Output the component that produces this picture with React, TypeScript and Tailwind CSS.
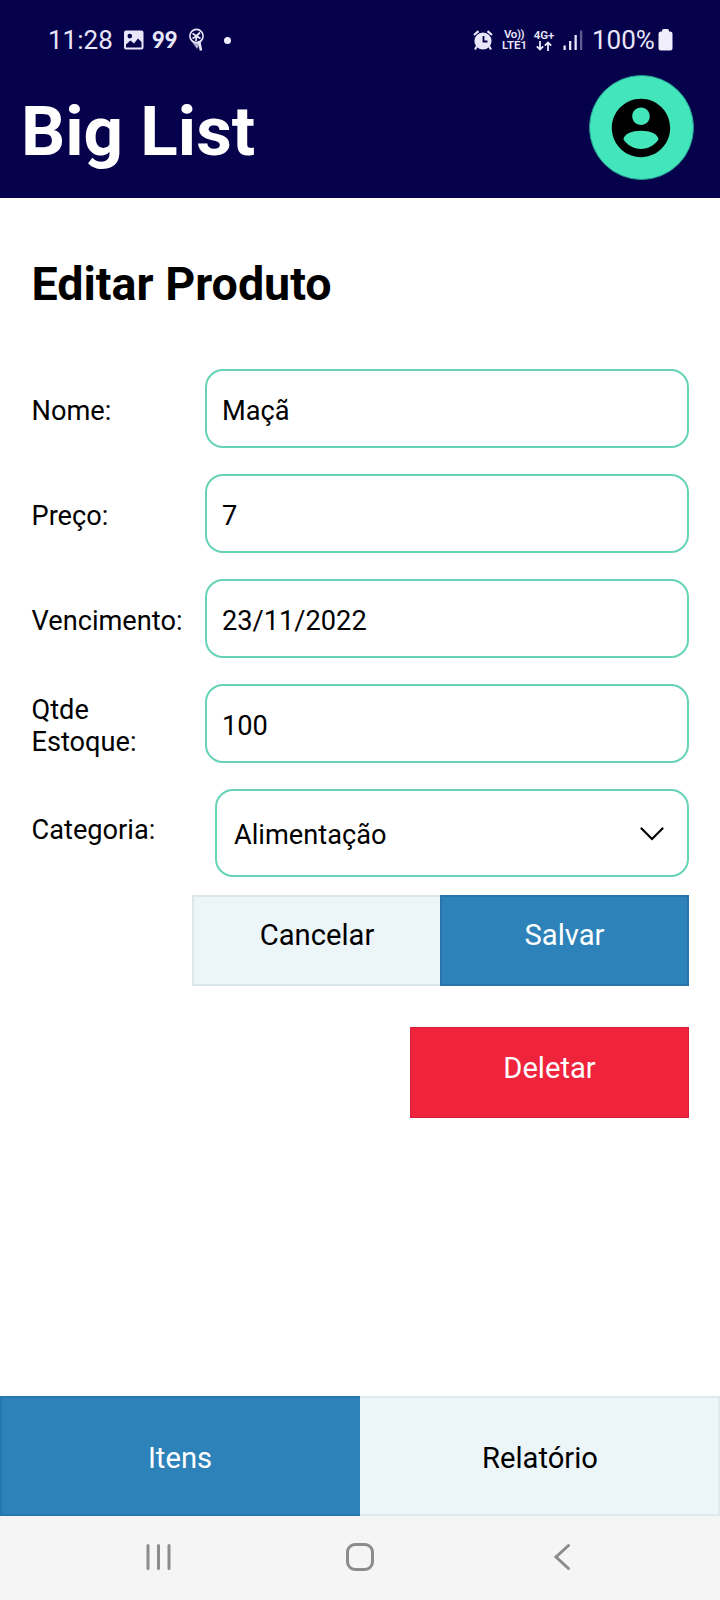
import React from "react";

function StatusBar() {
  return (
    <div className="flex h-[80px] items-center pl-[48px] text-[26px] text-[#e9e6fa]">
      <span className="w-[75px] leading-none">11:28</span>
      <svg className="ml-px h-[20px] w-[20px]" viewBox="0 0 20 20">
        <path fill="currentColor" fillRule="evenodd" d="M2 0.5H17.5Q19.5 .5 19.5 2.5V17.5Q19.5 19.5 17.5 19.5H2Q0 19.5 0 17.5V2.5Q0 .5 2 .5ZM5.8 3.8A2.3 2.3 0 1 0 5.8 8.4A2.3 2.3 0 1 0 5.8 3.8ZM2 17.5H17.5V12L14 8.5L10 13.5L6.5 10.5L2 14.5Z" />
      </svg>
      <span className="ml-[8px] w-[26px] font-[Lato,sans-serif] text-[22px] leading-none font-black">99</span>
      <svg className="ml-[10px] h-[24px] w-[18px]" viewBox="0 0 18 24" fill="none" stroke="currentColor">
        <path d="M2 11L9 21L12 16L15 11Z" fill="currentColor" stroke="none" opacity=".75" />
        <circle cx="8.5" cy="8" r="6.6" strokeWidth="1.6" fill="#05014a" />
        <path strokeWidth="1.8" d="M8.5 8L4.5 5.5M8.5 8L12 4.5M8.5 8L12.5 10.5M8.5 8L4.5 10.5M8.5 8L8 13" />
        <path strokeWidth="2.6" d="M11 13L13 22.5" />
      </svg>
      <span className="ml-[18px] h-[7px] w-[7px] rounded-full bg-[#f1effd]" />
      <svg className="ml-[242px] h-[22px] w-[20px]" viewBox="0 0 20 22">
        <circle cx="10" cy="12" r="8.6" fill="currentColor" />
        <path d="M1 6L5.5 2.2M19 6L14.5 2.2M4 17L2 20.5M16 17L18 20.5" stroke="currentColor" strokeWidth="2.2" fill="none" />
        <path d="M10.5 7V12.5H14.5" stroke="#05014a" strokeWidth="1.8" fill="none" />
      </svg>
      <span className="ml-[9px] flex w-[28px] flex-col text-[11.5px] leading-[11px] font-semibold">
        <span className="pl-[2px] tracking-[-0.4px]">Vo))</span>
        <span>LTE1</span>
      </span>
      <span className="ml-[3px] flex w-[22px] flex-col items-center text-[11.5px] leading-[11px] font-semibold">
        <span>4G+</span>
        <svg className="h-[10px] w-[16px]" viewBox="0 0 16 10" fill="none" stroke="currentColor" strokeWidth="1.8">
          <path d="M4 0V8.5M.8 5.3L4 8.5L7.2 5.3M12 10V1.5M8.8 4.7L12 1.5L15.2 4.7" />
        </svg>
      </span>
      <svg className="ml-[8px] h-[20px] w-[20px]" viewBox="0 0 20 20" fill="currentColor">
        <path d="M.5 15.5h2.3V20H.5zM6 11h2.3v9H6zM11.5 5h2.3v15h-2.3z" />
        <path opacity=".4" d="M17 .5h2.3V20H17z" />
      </svg>
      <span className="ml-[9px] w-[62px] leading-none">100%</span>
      <svg className="ml-[4px] h-[22px] w-[15px]" viewBox="0 0 15 22" fill="#f0eefa">
        <rect x="4" y="0" width="7" height="6" rx="1.5" />
        <rect x="0.5" y="2.5" width="14" height="19" rx="2.5" />
      </svg>
    </div>
  );
}

function Header() {
  return (
    <header className="h-[198px] bg-[#05014a]">
      <StatusBar />
      <div className="flex justify-between pr-[26px] pl-[21px]">
        <h1 className="mt-[12px] text-[69.3px] leading-[80px] font-bold text-white">Big List</h1>
        <div className="-mt-[5px] flex h-[105px] w-[105px] items-center justify-center rounded-full border border-[#259b93] bg-[#43e5bb] pr-[2px]">
          <svg className="h-[70px] w-[70px]" viewBox="0 0 24 24">
            <path d="M12 2C6.48 2 2 6.48 2 12s4.48 10 10 10 10-4.48 10-10S17.52 2 12 2zm0 3c1.66 0 3 1.34 3 3s-1.34 3-3 3-3-1.34-3-3 1.34-3 3-3zm0 14.2c-2.5 0-4.71-1.28-6-3.22 0-1.99 3-3.08 6-3.08 2.99 0 6 1.09 6 3.08-1.29 1.94-3.5 3.22-6 3.22z" />
          </svg>
        </div>
      </div>
    </header>
  );
}

function Field({ label, value }: { label: string; value: string }) {
  return (
    <div className="mb-[26px] flex h-[79px] items-center">
      <span className="w-[174px] pt-[4px] pr-[18px] pl-[0.5px] leading-[32px]">{label}</span>
      <div className="flex h-full flex-1 items-center rounded-[18px] border-2 border-[#67d3b6] pt-[5px] pl-[15px]">{value}</div>
    </div>
  );
}

export default function App() {
  return (
    <div className="flex h-[1600px] w-[720px] flex-col bg-white font-[Roboto,sans-serif] text-black">
      <Header />
      <main className="flex-1 pr-[31px] pl-[31px] text-[27.2px]">
        <h2 className="mt-[59px] mb-[57px] pl-[0.5px] text-[46.6px] leading-[55px] font-bold">Editar Produto</h2>
        <Field label="Nome:" value="Maçã" />
        <Field label="Preço:" value="7" />
        <Field label="Vencimento:" value="23/11/2022" />
        <Field label="Qtde Estoque:" value="100" />
        <div className="flex h-[88px]">
          <span className="w-[184px] pt-[25px] pl-[0.5px] leading-[32px]">Categoria:</span>
          <div className="flex flex-1 items-center justify-between rounded-[18px] border-2 border-[#67d3b6] pr-[22px] pl-[17px]">
            <span className="pt-[4px]">Alimentação</span>
            <svg className="mt-[2px] h-[14px] w-[26px]" viewBox="0 0 26 14" fill="none" stroke="black" strokeWidth="2.2" strokeLinecap="round">
              <path d="M2.5 1.5L13 12L23.5 1.5" />
            </svg>
          </div>
        </div>
        <div className="mt-[18px] ml-[161px] flex h-[91px] text-center text-[29.2px] leading-[34px]">
          <div className="w-[248px] border-2 border-r-0 border-[#dce7eb] bg-[#ecf5f8] pt-[21px]">Cancelar</div>
          <div className="flex-1 border-2 border-[#2874aa] bg-[#2d82b9] pt-[21px] text-white">Salvar</div>
        </div>
        <div className="mt-[41px] ml-[379px] h-[91px] border border-[#d31f3a] bg-[#f0233c] pt-[23px] text-center text-[29.2px] leading-[34px] text-white">Deletar</div>
      </main>
      <div className="flex h-[120px] text-[29.2px]">
        <div className="flex w-[360px] items-center justify-center border-2 border-r-0 border-[#2678b1] bg-[#2d82b9] pt-[5px] pr-[2px] text-white">Itens</div>
        <div className="flex flex-1 items-center justify-center border-2 border-l-0 border-[#deeaee] bg-[#ecf5f8] pt-[5px] pl-[2px]">Relatório</div>
      </div>
      <nav className="flex h-[84px] items-center bg-[#f5f5f5] pb-[3px] pl-[145px]">
        <svg className="h-[28px] w-[28px]" viewBox="0 0 28 28" stroke="#8c8c8c" strokeWidth="3" strokeLinecap="round">
          <path d="M3 2.5V25.5M13.5 2.5V25.5M24 2.5V25.5" />
        </svg>
        <div className="ml-[173px] h-[28px] w-[28px] rounded-[9px] border-[3px] border-[#8c8c8c]" />
        <svg className="ml-[179px] h-[28px] w-[18px]" viewBox="0 0 18 28" fill="none" stroke="#8c8c8c" strokeWidth="3" strokeLinecap="round">
          <path d="M15.5 2.5L3 14L15.5 25.5" />
        </svg>
      </nav>
    </div>
  );
}
